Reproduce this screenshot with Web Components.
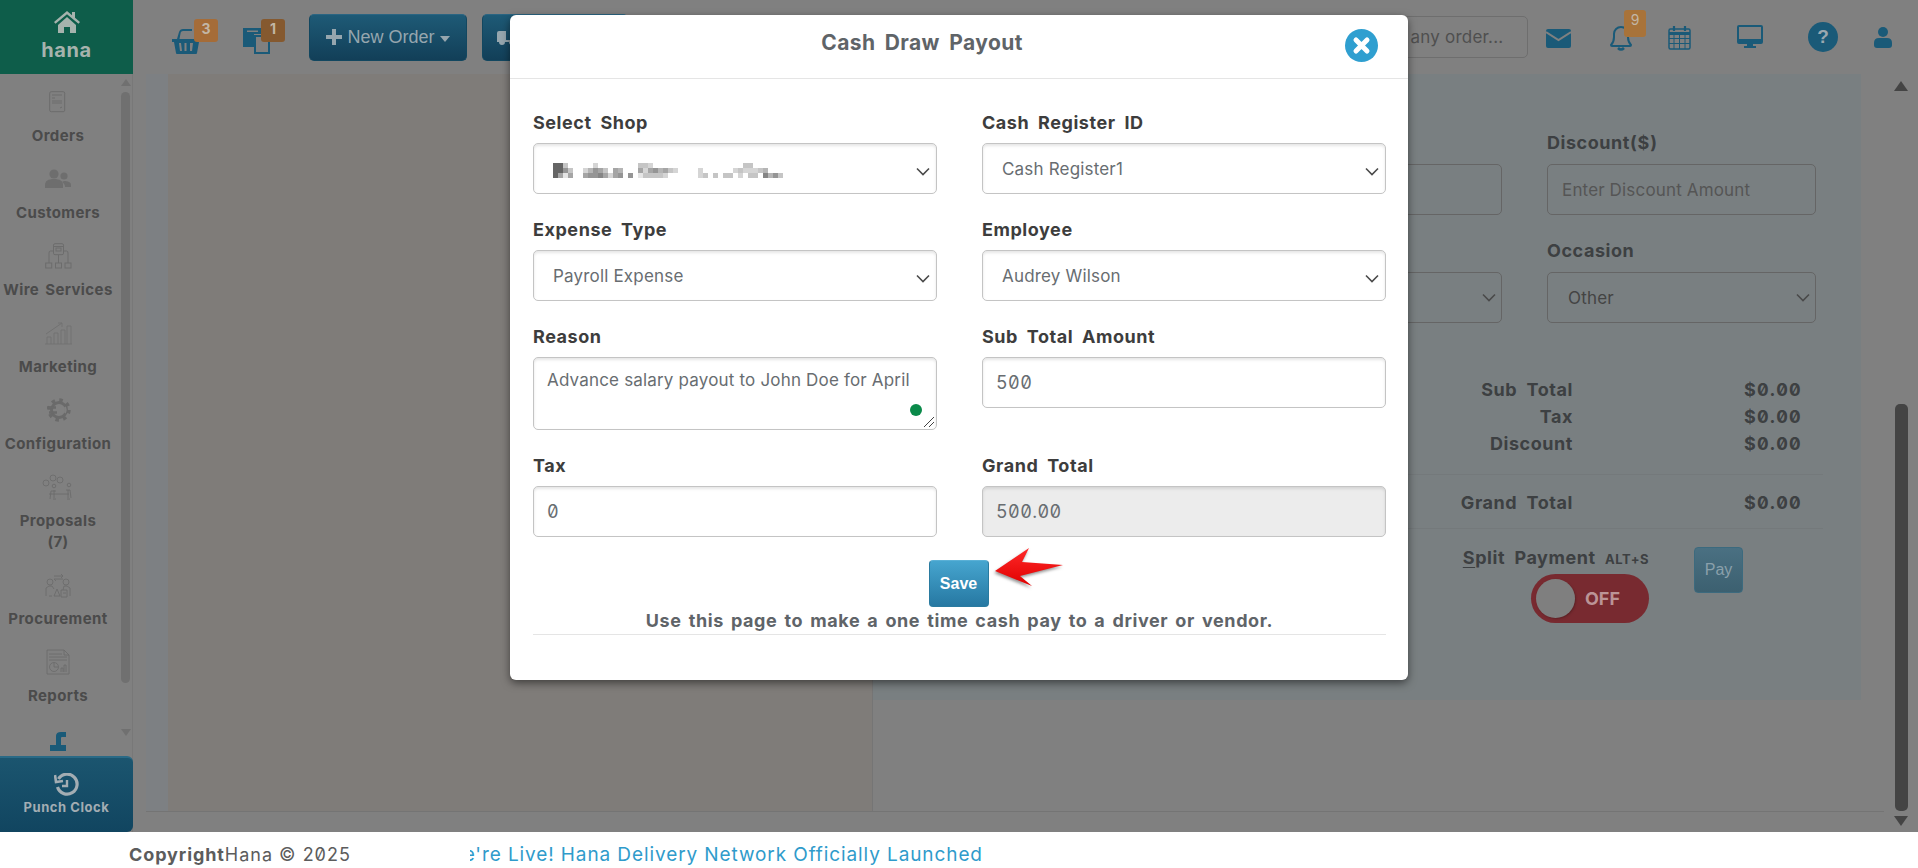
<!DOCTYPE html>
<html lang="en">
<head>
<meta charset="utf-8">
<title>Cash Draw Payout</title>
<style>
  html, body { margin: 0; padding: 0; height: 100%; overflow: hidden; background: #fff; }
  body { font-family: Inter, "Liberation Sans", sans-serif; }
  svg { display: block; }
</style>
</head>
<body>
<hana-app>
  <hana-sidebar slot="sidebar">
    <hana-nav-item label="Orders"><svg width="18" height="23" viewBox="0 0 18 23" fill="none" stroke="#6c6c6c"><rect x=".7" y=".7" width="15" height="20" rx="1.5"/><path d="M3 4h10M3 7h3M3 10h10M3 12h10M11 17l2-1"/></svg></hana-nav-item>
    <hana-nav-item label="Customers"><svg width="26" height="20" viewBox="0 0 26 20" fill="#6e6e6e"><circle cx="9" cy="5" r="4.6"/><circle cx="19" cy="7" r="3.6"/><path d="M0 19v-3c0-4 3-6 9-6s9 2 9 6v3z"/><path d="M19 12c4 0 7 1 7 4v2h-6c0-2-1-4-3-5z"/></svg></hana-nav-item>
    <hana-nav-item label="Wire Services"><svg width="27" height="26" viewBox="0 0 27 26" fill="none" stroke="#6c6c6c"><rect x="8.500" y=".7" width="10" height="11" rx="1.500"/><rect x="11" y="5" width="5" height="3"/><path d="M8.500 3.500h10M13.500 12v8M8 8H5.500Q4 8 4 10v10M19 8h2.500Q23 8 23 10v10"/><rect x=".7" y="20" width="6" height="5"/><rect x="10.500" y="20" width="6" height="5"/><rect x="20" y="20" width="6" height="5"/></svg></hana-nav-item>
    <hana-nav-item label="Marketing"><svg width="27" height="23" viewBox="0 0 27 23" fill="none" stroke="#727272"><path d="M0 22h27M2 22v-7h4v7M9 22v-11h4v11M16 22v-14h4v14M22 22V4h4v18M1 12l16-11M13 1h4v4"/></svg></hana-nav-item>
    <hana-nav-item label="Configuration"><svg width="25" height="24" viewBox="0 0 25 24" fill="none" stroke="#6a6a6a"><circle cx="13" cy="12" r="7.500" stroke-width="3"/><circle cx="13" cy="12" r="10" stroke-width="3.400" stroke-dasharray="3.500 4.350"/><path d="M1 9.500h9M3 14.500h8" stroke-width="2.600"/><path d="M19 9a7 7 0 0 1 0 6" stroke="#808080" stroke-width="2"/></svg></hana-nav-item>
    <hana-nav-item label="Proposals&#10;(7)"><svg width="33" height="26" viewBox="0 0 33 26" fill="none" stroke="#6c6c6c" stroke-width=".9"><circle cx="4" cy="9" r="3"/><circle cx="11" cy="4" r="3"/><circle cx="18" cy="6" r="3"/><circle cx="12" cy="12" r="1.800"/><circle cx="27" cy="11" r="1.800"/><path d="M8 25l1-8h5M7 20h20M29 24l-1-8h-4M12 16v8M26 16v8M11 25h3M25 25h3"/></svg></hana-nav-item>
    <hana-nav-item label="Procurement"><svg width="26" height="26" viewBox="0 0 26 26" fill="none" stroke="#6c6c6c" stroke-width=".9"><path d="M9 4h9M16 2l2 2-2 2M18 7H9l2 2"/><circle cx="5" cy="10" r="3"/><circle cx="21" cy="10" r="3"/><path d="M1 24V16l3-2h3l2 3M25 24V16l-3-2h-3l-1 4M9 24l3-7 3 7zM16 18h6v7h-6zM18 21h3M4 24h3"/></svg></hana-nav-item>
    <hana-nav-item label="Reports"><svg width="24" height="26" viewBox="0 0 24 26" fill="none" stroke="#6c6c6c" stroke-width=".9"><path d="M1 1h17l5 5v19H1zM18 1v5h5M3 5h13M3 8h18M3 11h18"/><circle cx="8" cy="18" r="4.500"/><path d="M8 18v-4M8 18h4M15 23v-4h2v4M18 23v-7h2v7"/></svg></hana-nav-item>
    <hana-nav-item label=""><svg width="16" height="21" viewBox="0 0 16 21" fill="#1a5a78" style="margin-top:3px"><path d="M6 21V6q0-4 5-4h5v5h-4q-1 0-1 1v7h5v6zM0 15h8v6H0z"/></svg></hana-nav-item>
  </hana-sidebar>

  <hana-topbar slot="topbar"></hana-topbar>

  <hana-workspace slot="workspace">
    <hana-order-form></hana-order-form>
  </hana-workspace>

  <hana-footer slot="footer"></hana-footer>

  <hana-modal slot="modal" heading="Cash Draw Payout">
    <hana-field label="Select Shop"><hana-control kind="select"><hana-mosaic></hana-mosaic></hana-control></hana-field>
    <hana-field label="Cash Register ID"><hana-control kind="select">Cash Register1</hana-control></hana-field>
    <hana-field label="Expense Type"><hana-control kind="select">Payroll Expense</hana-control></hana-field>
    <hana-field label="Employee"><hana-control kind="select">Audrey Wilson</hana-control></hana-field>
    <hana-field label="Reason"><hana-control kind="textarea">Advance salary payout to John Doe for April</hana-control></hana-field>
    <hana-field label="Sub Total Amount"><hana-control kind="number">500</hana-control></hana-field>
    <hana-field label="Tax"><hana-control kind="number">0</hana-control></hana-field>
    <hana-field label="Grand Total"><hana-control kind="number" disabled>500.00</hana-control></hana-field>
  </hana-modal>
</hana-app>

<script>
const CHEVRON = `<svg width="14" height="9" viewBox="0 0 14 9" fill="none" stroke="#4a4a4a" stroke-width="1.600"><path d="M1 1.500l6 6 6-6"/></svg>`

class HanaApp extends HTMLElement {
  constructor() {
    super()
    this.attachShadow({ mode: 'open' })
    this.shadowRoot.innerHTML = `
      <style>
        :host {
          display: grid;
          position: relative;
          width: 1918px;
          height: 868px;
          grid-template-columns: 133px 1fr;
          grid-template-rows: 74px 758px 36px;
          overflow: hidden;
          background: #fff;
        }
        ::slotted([slot=sidebar]) { grid-row: 1 / 3; }
        ::slotted([slot=footer]) { grid-column: 1 / 3; }
      </style>
      <slot name="sidebar"></slot>
      <slot name="topbar"></slot>
      <slot name="workspace"></slot>
      <slot name="footer"></slot>
      <slot name="modal"></slot>
    `
  }
}

class HanaScrollbar extends HTMLElement {
  constructor() {
    super()
    this.attachShadow({ mode: 'open' })
    this.shadowRoot.innerHTML = `
      <style>
        :host {
          display: flex;
          flex-direction: column;
          align-items: center;
          box-sizing: border-box;
          height: 100%;
          color: var(--bar, #707070);
        }
        .up, .down { width: 0; height: 0; border-left: var(--arrow, 5px) solid transparent; border-right: var(--arrow, 5px) solid transparent; }
        .up { margin-top: var(--up-top, 5px); border-bottom: var(--arrow-h, 7px) solid currentColor; }
        .down { margin-top: var(--down-gap, 46px); border-top: var(--arrow-h, 7px) solid currentColor; }
        .thumb {
          width: var(--thumb-w, 9px);
          height: var(--thumb-h, 591px);
          margin-top: var(--thumb-top, 6px);
          border-radius: 5px;
          background: currentColor;
        }
      </style>
      <div class="up"></div>
      <div class="thumb"></div>
      <div class="down"></div>
    `
  }
}

class HanaSidebar extends HTMLElement {
  constructor() {
    super()
    this.attachShadow({ mode: 'open' })
    this.shadowRoot.innerHTML = `
      <style>
        :host {
          display: flex;
          flex-direction: column;
          width: 133px;
          height: 832px;
          background: #808080;
          box-shadow: inset -1px 0 0 #787878;
        }
        .logo {
          display: flex;
          flex-direction: column;
          align-items: center;
          height: 74px;
          box-sizing: border-box;
          padding-top: 11px;
          background: #0e5d4a;
          color: #a6b3ad;
          font: 700 20px/22px Inter, sans-serif;
          letter-spacing: .6px;
        }
        .logo span { margin-top: 6px; }
        .mid { display: flex; height: 682px; overflow: hidden; }
        .list { width: 116px; height: 682px; padding-top: 10px; box-sizing: border-box; overflow: hidden; }
        hana-scrollbar { width: 9px; margin-left: 5px; }
        .punch {
          display: flex;
          flex-direction: column;
          align-items: center;
          height: 76px;
          box-sizing: border-box;
          padding-top: 15px;
          border-radius: 0 6px 6px 0;
          border-top: 2px solid #2a6a86;
          background: linear-gradient(#1b556f, #114560);
          color: #a3adb3;
          font: 700 13px/16px Inter, sans-serif;
          letter-spacing: .55px;
        }
        .punch span { margin-top: 2px; }
      </style>
      <div class="logo">
        <svg width="26" height="22" viewBox="0 0 26 22" fill="#a6b3ad"><path d="M13 0L0 11l1.500 1.800L13 3.300l11.500 9.500L26 11l-5-4.200V1h-3v3.300zM4 14v8h6v-6h6v6h6v-8L13 6z"/></svg>
        <span>hana</span>
      </div>
      <div class="mid">
        <div class="list"><slot></slot></div>
        <hana-scrollbar></hana-scrollbar>
      </div>
      <div class="punch">
        <svg width="25" height="24" viewBox="0 0 25 24" fill="none" stroke="#a3adb3" stroke-width="3.200"><path d="M4.500 6A10 10 0 1 1 3.500 14"/><path d="M1 2l1 7 7-1" stroke-width="2.600"/><path d="M13 7v6H8" stroke-width="2.400"/></svg>
        <span>Punch Clock</span>
      </div>
    `
  }
}

class HanaNavItem extends HTMLElement {
  constructor() {
    super()
    this.attachShadow({ mode: 'open' })
    this.shadowRoot.innerHTML = `
      <style>
        :host {
          display: flex;
          flex-direction: column;
          align-items: center;
          box-sizing: border-box;
          padding: 4px 0 15px;
          color: #4b4b4b;
          font: 700 15px/21px Inter, sans-serif;
          letter-spacing: .4px;
          word-spacing: 2px;
          text-align: center;
          white-space: pre-line;
        }
        .icon { display: flex; align-items: center; justify-content: center; height: 28px; margin-bottom: 9px; }
      </style>
      <div class="icon"><slot></slot></div>
      <div class="label"></div>
    `
  }

  connectedCallback() {
    this.shadowRoot.querySelector('.label').textContent = this.getAttribute('label')
  }
}

class HanaBadged extends HTMLElement {
  constructor() {
    super()
    this.attachShadow({ mode: 'open' })
    this.shadowRoot.innerHTML = `
      <style>
        :host { display: block; position: relative; flex: none; }
        .badge {
          position: absolute;
          left: var(--badge-x);
          top: var(--badge-y);
          width: var(--badge-w, 24px);
          height: var(--badge-h, 23px);
          border-radius: 3px;
          background: var(--badge-bg, #85592f);
          color: #c2b6a6;
          font: var(--badge-weight, 700) 14px/20px Inter, sans-serif;
          text-align: center;
        }
      </style>
      <slot></slot>
      <div class="badge"></div>
    `
  }

  connectedCallback() {
    this.shadowRoot.querySelector('.badge').textContent = this.getAttribute('count')
  }
}

class HanaTopbar extends HTMLElement {
  constructor() {
    super()
    this.attachShadow({ mode: 'open' })
    this.shadowRoot.innerHTML = `
      <style>
        :host {
          display: flex;
          align-items: center;
          height: 74px;
          padding: 0 26px 0 39px;
          box-sizing: border-box;
          background: #808080;
        }
        .btn {
          display: flex;
          flex: none;
          align-items: center;
          justify-content: center;
          gap: 5px;
          box-sizing: border-box;
          height: 47px;
          border: 1px solid #124760;
          border-top-color: #2b6582;
          border-radius: 5px;
          background: linear-gradient(#1e5a76, #123f58);
          color: #96a6ae;
          font: 400 18px/24px "Liberation Sans", sans-serif;
        }
        .new { width: 158px; margin-left: 39px; }
        .deliver { width: 146px; margin-left: 15px; justify-content: flex-start; padding-left: 14px; }
        .caret { width: 0; height: 0; margin-top: 3px; border-left: 5.500px solid transparent; border-right: 5.500px solid transparent; border-top: 6px solid #96a6ae; }
        .search {
          box-sizing: border-box;
          width: 228px;
          height: 42px;
          margin-left: auto;
          padding-left: 47px;
          border: 1px solid #6e6e6e;
          border-radius: 5px;
          color: #4f4f4f;
          font: 400 17px/40px Inter, sans-serif;
          letter-spacing: .2px;
          white-space: nowrap;
          overflow: hidden;
        }
        .gap { flex: none; }
        hana-badged.basket { --badge-x: 22px; --badge-y: -8px; --badge-bg: #a56c38; width: 28px; height: 27px; margin-top: 6px; }
        hana-badged.copy { --badge-x: 18px; --badge-y: -8px; width: 27px; height: 27px; margin: 6px 0 0 43px; }
        hana-badged.bell { --badge-x: 14px; --badge-y: -15px; --badge-w: 22px; --badge-h: 27px; --badge-bg: #a8733a; --badge-weight: 400; width: 22px; height: 27px; margin: 3px 0 0 39px; }
      </style>
      <hana-badged class="basket" count="3"><svg width="29" height="27" viewBox="0 0 29 27" fill="#1a5a78"><path d="M0 12h29v3h-2l-2 11q0 1-1 1H5q-1 0-1-1L2 15H0zM7 16l1 8h2l-1-8zM12.500 16v8h2v-8zM18 16v8h2l1-8z"/><path d="M5 12l2-7q1-3 4-3h9v2h-9q-2 0-2.300 1.500L7.500 12z"/></svg></hana-badged>
      <hana-badged class="copy" count="1"><svg width="27" height="27" viewBox="0 0 27 27" fill="#1a5a78"><path d="M0 1h20v6H11v13H0zM4 3.500v1.500h11V3.500z"/><path d="M11 8h16v19H11zM13 10v15h12V10z"/></svg></hana-badged>
      <div class="btn new">
        <svg width="16" height="16" viewBox="0 0 16 16" fill="#96a6ae"><path d="M6 0h4v6h6v4h-6v6H6v-6H0V6h6z"/></svg>
        New Order<span class="caret"></span>
      </div>
      <div class="btn deliver">
        <svg width="20" height="16" viewBox="0 0 20 16" fill="#96a6ae"><path d="M0 10V4q0-2 2-2h7v9h5V5h3l3 4v4h-2a3 3 0 0 1-6 0H8a3 3 0 0 1-6 0H0z"/></svg>
      </div>
      <div class="search">Search any order...</div>
      <svg class="gap" style="margin:3px 0 0 18px" width="25" height="19" viewBox="0 0 25 19"><rect width="25" height="19" rx="2" fill="#1a5a78"/><path d="M0 3l12.500 8L25 3" fill="none" stroke="#808080" stroke-width="2"/></svg>
      <hana-badged class="bell" count="9"><svg width="22" height="27" viewBox="0 0 22 27" fill="none" stroke="#1a5a78" stroke-width="2"><path d="M1 20q3-3 3-8V9a7 7 0 0 1 14 0v3q0 5 3 8q0 1-1 1H2q-1 0-1-1z"/><path d="M8 23q3 3 6 0" stroke-width="2.500"/></svg></hana-badged>
      <svg class="gap" style="margin-left:36px" width="23" height="25" viewBox="0 0 23 25" fill="none" stroke="#1a5a78"><rect x="1" y="4" width="21" height="20" rx="1.500" stroke-width="1.500"/><path d="M1 8.500h21" stroke-width="3"/><path d="M1 13.500h21M1 18.500h21M6 9v15M11.500 9v15M17 9v15"/><path d="M6 1v5M17 1v5" stroke-width="2.200"/></svg>
      <svg class="gap" style="margin:-1px 0 0 46px" width="26" height="23" viewBox="0 0 26 23" fill="#1a5a78"><path d="M2 0h22q2 0 2 2v15q0 2-2 2H16v2h3v2H7v-2h3v-2H2q-2 0-2-2V2q0-2 2-2zM2 2v12h22V2z"/></svg>
      <div class="gap" style="width:30px;height:30px;margin-left:45px;border-radius:50%;background:#1a5a78;color:#9aa8b0;font:700 19px/30px 'Liberation Sans',sans-serif;text-align:center">?</div>
      <svg class="gap" style="margin:1px 0 0 36px" width="18" height="21" viewBox="0 0 18 21" fill="#1a5a78"><circle cx="9" cy="5" r="5"/><path d="M0 16q0-5 5-5h8q5 0 5 5v2q0 3-3 3H3q-3 0-3-3z"/></svg>
    `
  }
}

class HanaWorkspace extends HTMLElement {
  constructor() {
    super()
    this.attachShadow({ mode: 'open' })
    this.shadowRoot.innerHTML = `
      <style>
        :host { display: flex; height: 758px; background: #808080; }
        .main { display: flex; flex-direction: column; width: 1751px; }
        .panels { display: flex; height: 737px; margin-left: 13px; }
        .band { width: 22px; background: #7d8083; }
        .left { width: 705px; background: #7f7c79; box-shadow: inset -1px 0 0 #757575; }
        .right { width: 988px; }
        .strip { flex: 1; margin-left: 13px; border-top: 1px solid #747474; }
        hana-scrollbar {
          width: 34px;
          --bar: #444;
          --arrow: 7.500px;
          --arrow-h: 10px;
          --up-top: 7px;
          --thumb-w: 13px;
          --thumb-h: 407px;
          --thumb-top: 313px;
          --down-gap: 5px;
        }
      </style>
      <div class="main">
        <div class="panels">
          <div class="band"></div>
          <div class="left"></div>
          <div class="right"><slot></slot></div>
        </div>
        <div class="strip"></div>
      </div>
      <hana-scrollbar></hana-scrollbar>
    `
  }
}

class HanaOrderForm extends HTMLElement {
  constructor() {
    super()
    this.attachShadow({ mode: 'open' })
    this.shadowRoot.innerHTML = `
      <style>
        :host {
          display: block;
          box-sizing: border-box;
          height: 626px;
          padding-top: 59px;
          background: #797f81;
          color: #3d4042;
          font: 700 18px/20px Inter, sans-serif;
          letter-spacing: .55px;
          word-spacing: 4px;
          font-feature-settings: "zero", "tnum";
        }
        .fields {
          display: grid;
          grid-template-columns: 269px 269px;
          column-gap: 45px;
          row-gap: 26px;
          width: 583px;
          margin-left: 360px;
        }
        .field { display: flex; flex-direction: column; gap: 11px; }
        .box {
          display: flex;
          align-items: center;
          justify-content: space-between;
          box-sizing: border-box;
          height: 51px;
          padding: 0 5px 0 14px;
          border: 1px solid #656565;
          border-radius: 5px;
          color: #555;
          font-size: 17px;
          font-weight: 400;
          letter-spacing: .18px;
          word-spacing: 0;
        }
        .box.sel { padding-left: 20px; color: #444; }
        .row { display: grid; grid-template-columns: 700px 229px; }
        .row span { text-align: right; }
        .row span:last-child { letter-spacing: 1.300px; word-spacing: 0; }
        .rows { padding: 53px 0 0; width: 950px; line-height: 27px; }
        .rows hr { margin: 17px 0 14px; border: 0; border-top: 1px solid #74797b; }
        .rows hr.end { margin: 12px 0 18px; }
        .pay-row { display: flex; width: 950px; }
        .split { display: flex; flex-direction: column; align-items: flex-end; width: 776px; }
        .split-text { line-height: 22px; white-space: nowrap; }
        .split-text u { text-decoration-thickness: 1px; text-underline-offset: 3px; }
        .split-text small { font-size: 13px; letter-spacing: .5px; }
        .toggle {
          display: flex;
          align-items: center;
          box-sizing: border-box;
          width: 118px;
          height: 49px;
          margin-top: 4px;
          padding-left: 5px;
          border-radius: 25px;
          background: #782a30;
          color: #bb9496;
          font: 700 18px/20px Inter, sans-serif;
          letter-spacing: 0;
        }
        .knob { width: 39px; height: 39px; margin-right: 10px; border-radius: 50%; background: #7f7f7f; box-shadow: 1px 1px 2px #5d2226; }
        .pay {
          width: 49px;
          height: 46px;
          margin-left: 45px;
          box-sizing: border-box;
          border: 1px solid #3c6a7e;
          border-radius: 4px;
          background: linear-gradient(#4a7082, #3c6070);
          color: #8aa0ab;
          font: 400 16px/44px "Liberation Sans", sans-serif;
          letter-spacing: 0;
          text-align: center;
        }
      </style>
      <div class="fields">
        <div class="field"><span>&nbsp;</span><div class="box"></div></div>
        <div class="field"><span>Discount($)</span><div class="box">Enter Discount Amount</div></div>
        <div class="field"><span>&nbsp;</span><div class="box sel"><span></span>${CHEVRON}</div></div>
        <div class="field"><span>Occasion</span><div class="box sel"><span>Other</span>${CHEVRON}</div></div>
      </div>
      <div class="rows">
        <div class="row"><span>Sub Total</span><span>$0.00</span></div>
        <div class="row"><span>Tax</span><span>$0.00</span></div>
        <div class="row"><span>Discount</span><span>$0.00</span></div>
        <hr>
        <div class="row"><span>Grand Total</span><span>$0.00</span></div>
        <hr class="end">
      </div>
      <div class="pay-row">
        <div class="split">
          <div class="split-text"><u>S</u>plit Payment <small>ALT+S</small></div>
          <div class="toggle"><span class="knob"></span>OFF</div>
        </div>
        <div class="pay">Pay</div>
      </div>
    `
  }
}

class HanaFooter extends HTMLElement {
  constructor() {
    super()
    this.attachShadow({ mode: 'open' })
    this.shadowRoot.innerHTML = `
      <style>
        :host {
          display: flex;
          align-items: center;
          box-sizing: border-box;
          height: 36px;
          padding: 9px 0 0 129px;
          background: #fff;
          color: #5c5c5c;
          font: 400 18px/20px Inter, sans-serif;
          letter-spacing: 1px;
          font-feature-settings: "zero";
        }
        .copy { width: 341px; flex: none; white-space: nowrap; }
        b { font-weight: 700; letter-spacing: .9px; }
        .ticker { width: 600px; overflow: hidden; white-space: nowrap; color: #2f9bcb; font-size: 19px; letter-spacing: .9px; }
        .ticker span { display: inline-block; margin-left: -25px; }
      </style>
      <div class="copy"><b>Copyright</b>Hana © 2025</div>
      <div class="ticker"><span>We're Live! Hana Delivery Network Officially Launched</span></div>
    `
  }
}

class HanaModal extends HTMLElement {
  constructor() {
    super()
    this.attachShadow({ mode: 'open' })
    this.shadowRoot.innerHTML = `
      <style>
        :host {
          display: block;
          position: absolute;
          left: 510px;
          top: 15px;
          width: 898px;
          height: 665px;
          border-radius: 6px;
          background: #fff;
          box-shadow: 0 3px 9px rgba(0,0,0,.5);
          font-family: Inter, sans-serif;
        }
        header {
          position: relative;
          box-sizing: border-box;
          height: 64px;
          padding-right: 74px;
          border-bottom: 1px solid #e5e5e5;
          color: #5f6468;
          font: 700 21px/56px Inter, sans-serif;
          letter-spacing: .4px;
          word-spacing: 4px;
          text-align: center;
        }
        .close { position: absolute; right: 30px; top: 14px; }
        .body {
          display: grid;
          grid-template-columns: 404px 404px;
          column-gap: 45px;
          row-gap: 26px;
          padding: 34px 22px 0 23px;
        }
        .actions {
          display: flex;
          flex-direction: column;
          align-items: center;
          margin: 23px 22px 0 23px;
          position: relative;
        }
        button {
          width: 60px;
          height: 47px;
          margin-right: 2px;
          padding: 0;
          border: 1px solid #2a7ba0;
          border-top-color: #5ab0d6;
          border-radius: 4px;
          background: linear-gradient(#46a5cf, #2678a2);
          color: #fff;
          font: 700 16px/45px "Liberation Sans", sans-serif;
        }
        .arrow { position: absolute; left: 460px; top: -13px; filter: drop-shadow(-1px 2px 1.500px rgba(90,90,90,.65)); }
        .note {
          align-self: stretch;
          margin-top: 3px;
          padding-bottom: 2px;
          border-bottom: 1px solid #e5e5e5;
          color: #5f6468;
          font: 700 18px/22px Inter, sans-serif;
          letter-spacing: .6px;
          word-spacing: 2.200px;
          text-align: center;
          white-space: nowrap;
        }
      </style>
      <header>
        <span class="title"></span>
        <svg class="close" width="33" height="33" viewBox="0 0 33 33"><circle cx="16.500" cy="16.500" r="16.500" fill="#2f9fd0"/><path d="M11 11l11 11M22 11L11 22" stroke="#fff" stroke-width="5" stroke-linecap="round"/></svg>
      </header>
      <div class="body"><slot></slot></div>
      <div class="actions">
        <button type="button">Save</button>
        <svg class="arrow" width="70" height="40" viewBox="0 0 70 40"><defs><linearGradient id="red" x1="0" y1="0" x2="0" y2="1"><stop offset="0" stop-color="#ff2a2a"/><stop offset="1" stop-color="#e00000"/></linearGradient></defs><polygon points="2,24 36,1 29,15 70,18 27,29 39,39" fill="url(#red)"/></svg>
        <div class="note">Use this page to make a one time cash pay to a driver or vendor.</div>
      </div>
    `
  }

  connectedCallback() {
    this.shadowRoot.querySelector('.title').textContent = this.getAttribute('heading')
  }
}

class HanaField extends HTMLElement {
  constructor() {
    super()
    this.attachShadow({ mode: 'open' })
    this.shadowRoot.innerHTML = `
      <style>
        :host { display: flex; flex-direction: column; gap: 10px; }
        label {
          color: #3d3d3d;
          font: 700 18px/20px Inter, sans-serif;
          letter-spacing: .55px;
          word-spacing: 4px;
        }
      </style>
      <label></label>
      <slot></slot>
    `
  }

  connectedCallback() {
    this.shadowRoot.querySelector('label').textContent = this.getAttribute('label')
  }
}

class HanaControl extends HTMLElement {
  constructor() {
    super()
    this.attachShadow({ mode: 'open' })
    const kind = this.getAttribute('kind')
    let extra = ''
    if (kind === 'select') extra = `<span class="chevron">${CHEVRON}</span>`
    if (kind === 'textarea') {
      extra = `<span class="dot"></span><svg class="grip" width="12" height="12" viewBox="0 0 12 12" stroke="#444"><path d="M1 11L11 1M6 11l5-5"/></svg>`
    }
    this.shadowRoot.innerHTML = `
      <style>
        :host {
          display: flex;
          position: relative;
          align-items: center;
          box-sizing: border-box;
          height: 51px;
          padding: 0 40px 0 19px;
          border: 1px solid #c4c4c4;
          border-radius: 5px;
          background: #fff;
          box-shadow: inset 0 2px 3px rgba(0,0,0,.1);
          color: #686d71;
          font: 400 17px/22px Inter, sans-serif;
          letter-spacing: .18px;
        }
        :host([kind=textarea]) {
          height: 73px;
          padding: 11px 10px 6px 13px;
          align-items: flex-start;
        }
        :host([kind=number]) {
          padding-left: 13px;
          font-size: 18px;
          font-feature-settings: "zero", "tnum";
          letter-spacing: .4px;
        }
        :host([disabled]) { background: #ececec; }
        .chevron { position: absolute; right: 6px; top: 15px; }
        .dot { position: absolute; right: 14px; bottom: 13px; width: 12px; height: 12px; border-radius: 50%; background: #0a8a4a; }
        .grip { position: absolute; right: 1px; bottom: 1px; }
      </style>
      <slot></slot>
      ${extra}
    `
  }
}

class HanaMosaic extends HTMLElement {
  constructor() {
    super()
    this.attachShadow({ mode: 'open' })
    const rows = [
      '99300000200000000332000000000000000000330000000',
      '99630024653054000525645320000200000023222340000',
      '95150056675256060133332000000230303302033074630'
    ]
    let rects = ''
    rows.forEach((row, y) => {
      [...row].forEach((c, x) => {
        if (c === '0') return
        const v = 245 - Number(c) * 16
        rects += `<rect x="${x * 5}" y="${y * 5}" width="5" height="5" fill="rgb(${v},${v},${v})"/>`
      })
    })
    this.shadowRoot.innerHTML = `
      <style>:host { display: block; width: 236px; height: 15px; }</style>
      <svg width="236" height="15" viewBox="0 0 236 15" shape-rendering="crispEdges">${rects}</svg>
    `
  }
}

customElements.define('hana-scrollbar', HanaScrollbar)
customElements.define('hana-nav-item', HanaNavItem)
customElements.define('hana-badged', HanaBadged)
customElements.define('hana-mosaic', HanaMosaic)
customElements.define('hana-control', HanaControl)
customElements.define('hana-field', HanaField)
customElements.define('hana-sidebar', HanaSidebar)
customElements.define('hana-topbar', HanaTopbar)
customElements.define('hana-order-form', HanaOrderForm)
customElements.define('hana-workspace', HanaWorkspace)
customElements.define('hana-footer', HanaFooter)
customElements.define('hana-modal', HanaModal)
customElements.define('hana-app', HanaApp)
</script>
</body>
</html>
